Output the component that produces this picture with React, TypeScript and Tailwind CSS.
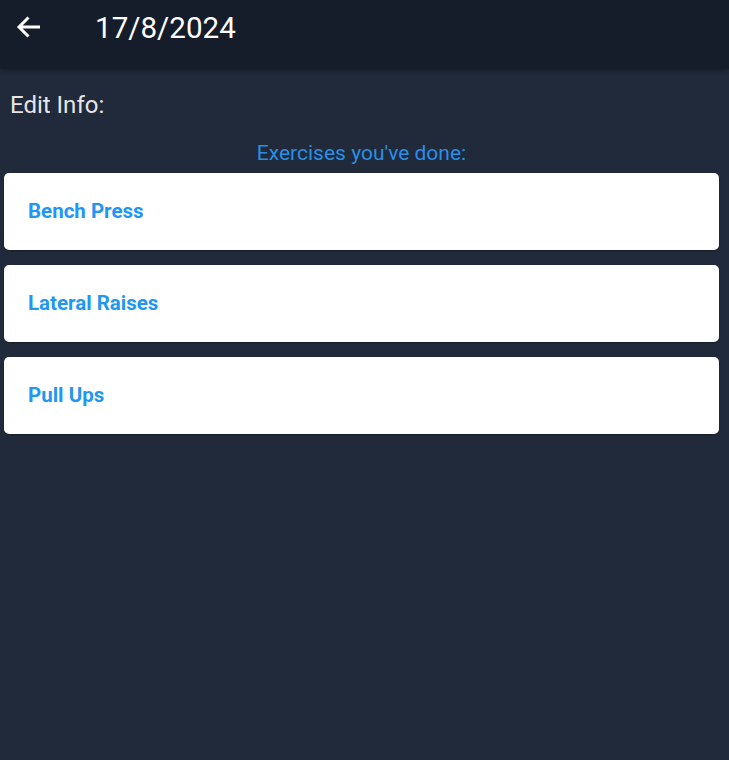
import React from "react";

const exercises = ["Bench Press", "Lateral Raises", "Pull Ups"];

export default function App() {
  return (
    <div
      className="w-[729px] h-[760px] bg-[#202a3a] flex flex-col"
      style={{ fontFamily: "Roboto, 'Noto Sans', sans-serif" }}
    >
      <header className="h-[69px] bg-[#161d2a] flex items-start shrink-0 shadow-[0_2px_4px_rgba(0,0,0,0.25)]">
        <div className="pl-[15px] pt-[14px]">
          <svg width="26" height="26" viewBox="0 0 26 26" fill="none">
            <path
              d="M25 13H4M13.5 3.5L4 13L13.5 22.5"
              stroke="white"
              strokeWidth="3"
              strokeLinecap="butt"
              strokeLinejoin="miter"
            />
          </svg>
        </div>
        <h1 className="ml-[54px] mt-[13px] text-[29.6px] text-white leading-[30px]">17/8/2024</h1>
      </header>
      <div className="flex flex-col">
        <div className="pl-[10px] pt-[22px] text-[24px] leading-[28px] text-[#e6e6e6]">Edit Info:</div>
        <div className="mt-[22px] pr-[6px] text-center text-[21px] leading-[24px] text-[#2a8ee6]">
          Exercises you've done:
        </div>
        <div className="mt-[8px] flex flex-col gap-[15px] pl-[4px] pr-[10px]">
          {exercises.map((e) => (
            <div
              key={e}
              className="h-[77px] bg-white rounded-[5px] flex items-center pl-[24px] shadow-[0_1px_2px_rgba(0,0,0,0.3)]"
            >
              <span className="text-[20.5px] font-bold text-[#2196f3]">{e}</span>
            </div>
          ))}
        </div>
      </div>
    </div>
  );
}
